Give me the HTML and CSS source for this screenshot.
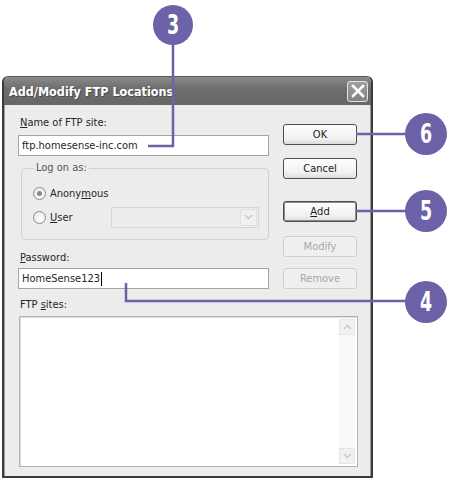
FILE: index.html
```html
<!DOCTYPE html>
<html lang="en">
<head>
  <meta charset="UTF-8" />
  <title>Add/Modify FTP Locations</title>
  <link rel="stylesheet" href="styles.css">
</head>
<body>
  <div class="stage">
    <div class="dialog">
      <div class="titlebar">
        <span class="title">Add/Modify FTP Locations</span>
        <span class="close">
          <svg width="14" height="14" viewBox="0 0 14 14"><path d="M2 2 L12 12 M12 2 L2 12" stroke="#fff" stroke-width="2.6" stroke-linecap="square"/></svg>
        </span>
      </div>

      <div class="content">
        <div class="top">
          <div class="fields">
            <div class="label"><u>N</u>ame of FTP site:</div>
            <div class="input">ftp.homesense-inc.com</div>

            <fieldset class="group">
              <legend>Log on as:</legend>
              <div class="radio-row first">
                <span class="radio checked"></span>
                <span>Anony<u>m</u>ous</span>
              </div>
              <div class="radio-row">
                <span class="radio"></span>
                <span class="radio-text"><u>U</u>ser</span>
                <span class="select"><span class="arrow">
                  <svg width="9" height="6" viewBox="0 0 9 6"><path d="M1 1 L4.5 4.5 L8 1" fill="none" stroke="#c4c4c4" stroke-width="1.4"/></svg>
                </span></span>
              </div>
            </fieldset>

            <div class="label pw-label"><u>P</u>assword:</div>
            <div class="input">HomeSense123<span class="caret"></span></div>
          </div>

          <div class="buttons">
            <div class="btn ok">OK</div>
            <div class="btn cancel">Cancel</div>
            <div class="btn add"><u>A</u>dd</div>
            <div class="btn modify disabled">Modify</div>
            <div class="btn remove disabled">Remove</div>
          </div>
        </div>

        <div class="label sites-label">FTP <u>s</u>ites:</div>
        <div class="list">
          <div class="scroll">
            <span class="scroll-btn">
              <svg width="9" height="6" viewBox="0 0 9 6"><path d="M1 5 L4.5 1.5 L8 5" fill="none" stroke="#c8c8c8" stroke-width="1.4"/></svg>
            </span>
            <span class="scroll-btn">
              <svg width="9" height="6" viewBox="0 0 9 6"><path d="M1 1 L4.5 4.5 L8 1" fill="none" stroke="#c8c8c8" stroke-width="1.4"/></svg>
            </span>
          </div>
        </div>
      </div>
    </div>

    <!-- step callouts -->
    <svg class="callouts" width="450" height="480" viewBox="0 0 450 480">
      <g stroke="#6c62a7" stroke-width="2.5" fill="none">
        <path d="M173 40 V146 H148"/>
        <path d="M356 134 H410"/>
        <path d="M356 211 H410"/>
        <path d="M126 283 V301 H410"/>
      </g>
      <g fill="#6c62a7">
        <circle cx="173" cy="25" r="20"/>
        <circle cx="426" cy="134" r="21"/>
        <circle cx="426" cy="211" r="21"/>
        <circle cx="426" cy="302" r="21"/>
      </g>
      <g class="num" fill="#fff" text-anchor="middle">
        <text transform="translate(173 34) scale(0.72 1)">3</text>
        <text transform="translate(426 143) scale(0.72 1)">6</text>
        <text transform="translate(426 220) scale(0.72 1)">5</text>
        <text transform="translate(426 311) scale(0.72 1)">4</text>
      </g>
    </svg>
  </div>
</body>
</html>
```

FILE: styles.css
```css
* {
  margin: 0;
  padding: 0;
  box-sizing: border-box;
}

body {
  background: #fff;
  font-family: "DejaVu Sans Condensed", "DejaVu Sans", sans-serif;
  font-size: 11px;
  color: #262626;
}

.stage {
  position: relative;
  width: 450px;
  height: 480px;
  padding: 76px 0 0 2px;
  overflow: hidden;
}

.dialog {
  width: 371px;
  height: 402px;
  background: #ececec;
  border: 2px solid #3c3c3c;
  border-top: 1px solid #555;
  border-radius: 6px 6px 0 0;
  box-shadow: inset 1px 0 #9a9a9a, inset -1px 0 #9a9a9a;
}

.titlebar {
  height: 28px;
  display: flex;
  align-items: center;
  justify-content: space-between;
  padding: 0 3px 0 5px;
  background: linear-gradient(#8a8a8a, #6e6e6e 40%, #666);
  border-radius: 5px 5px 0 0;
}

.title {
  color: #fff;
  font-weight: bold;
  font-size: 12.5px;
  text-shadow: 1px 1px #4a4a4a;
}

.close {
  width: 21px;
  height: 21px;
  display: flex;
  align-items: center;
  justify-content: center;
  background: linear-gradient(#a0a0a0, #828282);
  border: 1px solid #e4e4e4;
  border-radius: 3px;
}

.content {
  padding: 11px 0 0 14px;
}

.top {
  display: flex;
  gap: 14px;
}

.fields {
  width: 251px;
}

.label {
  height: 14px;
  line-height: 14px;
  padding-left: 2px;
}

u {
  text-decoration: underline;
  text-underline-offset: 1px;
}

.input {
  margin-top: 5px;
  height: 21px;
  line-height: 19px;
  padding-left: 3px;
  background: #fff;
  border: 1px solid #a4a4a4;
  display: flex;
  align-items: center;
}

.caret {
  display: inline-block;
  width: 1px;
  height: 14px;
  background: #000;
  margin-left: 1px;
}

.group {
  margin: 5px 0 0 3px;
  height: 79px;
  width: 246px;
  border: 1px solid #d2d2cc;
  border-radius: 4px;
  padding: 0 9px 0 11px;
}

.group legend {
  padding: 0 2px;
  margin-left: 1px;
  height: 14px;
  line-height: 14px;
  color: #555;
}

.radio-row {
  display: flex;
  align-items: center;
  height: 22px;
  gap: 4px;
}

.radio-row.first {
  margin-top: 9px;
  height: 18px;
  margin-bottom: 4px;
}

.radio {
  width: 13px;
  height: 13px;
  border-radius: 50%;
  border: 1px solid #8c8c8c;
  background: radial-gradient(circle at 60% 60%, #fff, #e2e2e2);
  display: flex;
  align-items: center;
  justify-content: center;
}

.radio.checked::after {
  content: "";
  width: 5px;
  height: 5px;
  border-radius: 50%;
  background: #8a8a8a;
}

.radio-text {
  width: 57px;
}

.select {
  width: 148px;
  height: 21px;
  border: 1px solid #d6d6d6;
  background: #ededed;
  display: flex;
  justify-content: flex-end;
  align-items: center;
  padding: 1px;
}

.arrow {
  width: 17px;
  height: 17px;
  display: flex;
  align-items: center;
  justify-content: center;
  background: #f0f0f0;
  border: 1px solid #e2e2e2;
}

.pw-label {
  margin-top: 11px;
}

.pw-label + .input {
  margin-top: 3px;
}

.buttons {
  width: 74px;
  display: flex;
  flex-direction: column;
}

.btn {
  height: 21px;
  display: flex;
  align-items: center;
  justify-content: center;
  border: 1px solid #4e4e4e;
  border-radius: 3px;
  background: linear-gradient(#fdfdfd, #f2f2f2 70%, #dcdcdc);
  color: #1a1a1a;
}

.ok { margin-top: 8px; }
.cancel { margin-top: 13px; }
.add {
  margin-top: 22px;
  box-shadow: inset 0 0 0 1px #8a8a8a;
}
.modify { margin-top: 14px; }
.remove { margin-top: 11px; }

.btn.disabled {
  border-color: #cfcfcf;
  background: #efefef;
  color: #a8a8a8;
}

.sites-label {
  margin-top: 9px;
}

.list {
  margin: 4px 0 0 1px;
  width: 339px;
  height: 151px;
  background: #fff;
  border: 1px solid #b2b2b2;
  box-shadow: inset 1px 1px #dcdcdc;
  display: flex;
  justify-content: flex-end;
  padding: 2px;
}

.scroll {
  width: 16px;
  display: flex;
  flex-direction: column;
  justify-content: space-between;
  background: #fafafa;
}

.scroll-btn {
  height: 16px;
  display: flex;
  align-items: center;
  justify-content: center;
  background: #f1f1f1;
  border: 1px solid #e4e4e4;
}

.callouts {
  position: absolute;
  left: 0;
  top: 0;
}

.num text {
  font-family: "DejaVu Sans Condensed", "DejaVu Sans", sans-serif;
  font-weight: bold;
  font-size: 27px;
}
```
